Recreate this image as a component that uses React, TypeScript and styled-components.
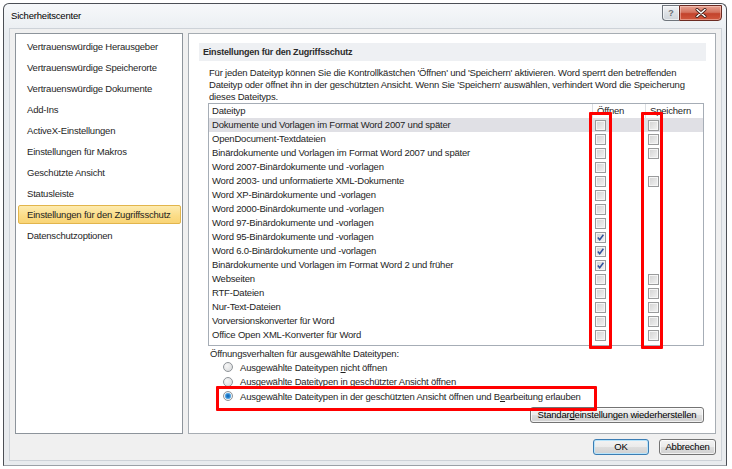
import React from "react";
import styled, { createGlobalStyle } from "styled-components";

const GlobalStyle = createGlobalStyle`
  * { box-sizing: border-box; }
  html, body { margin: 0; padding: 0; background: #ffffff; }
  body {
    font-family: "Liberation Sans", Arial, sans-serif;
    font-size: 9.5px;
    letter-spacing: -0.2px;
    color: #1e1e1e;
  }
`;

const navItems = [
  "Vertrauenswürdige Herausgeber",
  "Vertrauenswürdige Speicherorte",
  "Vertrauenswürdige Dokumente",
  "Add-Ins",
  "ActiveX-Einstellungen",
  "Einstellungen für Makros",
  "Geschützte Ansicht",
  "Statusleiste",
  "Einstellungen für den Zugriffsschutz",
  "Datenschutzoptionen",
];

type FileRow = { label: string; open: boolean; save: boolean | null };

const fileRows: FileRow[] = [
  { label: "Dokumente und Vorlagen im Format Word 2007 und später", open: false, save: false },
  { label: "OpenDocument-Textdateien", open: false, save: false },
  { label: "Binärdokumente und Vorlagen im Format Word 2007 und später", open: false, save: false },
  { label: "Word 2007-Binärdokumente und -vorlagen", open: false, save: null },
  { label: "Word 2003- und unformatierte XML-Dokumente", open: false, save: false },
  { label: "Word XP-Binärdokumente und -vorlagen", open: false, save: null },
  { label: "Word 2000-Binärdokumente und -vorlagen", open: false, save: null },
  { label: "Word 97-Binärdokumente und -vorlagen", open: false, save: null },
  { label: "Word 95-Binärdokumente und -vorlagen", open: true, save: null },
  { label: "Word 6.0-Binärdokumente und -vorlagen", open: true, save: null },
  { label: "Binärdokumente und Vorlagen im Format Word 2 und früher", open: true, save: null },
  { label: "Webseiten", open: false, save: false },
  { label: "RTF-Dateien", open: false, save: false },
  { label: "Nur-Text-Dateien", open: false, save: false },
  { label: "Vorversionskonverter für Word", open: false, save: false },
  { label: "Office Open XML-Konverter für Word", open: false, save: false },
];

const App = () => {
  return (
    <>
      <GlobalStyle />
      <Window>
        <TitleBar>
          <Title>Sicherheitscenter</Title>
          <Controls>
            <HelpButton>?</HelpButton>
            <CloseButton>
              <svg width="12" height="10" viewBox="0 0 12 10">
                <path d="M2 1.5 L10 8.5 M10 1.5 L2 8.5" stroke="#3a1a14" strokeWidth="3" strokeLinecap="round" />
                <path d="M2 1.5 L10 8.5 M10 1.5 L2 8.5" stroke="#ffffff" strokeWidth="1.6" strokeLinecap="round" />
              </svg>
            </CloseButton>
          </Controls>
        </TitleBar>

        <Client>
          <Body>
            <NavPanel>
              {navItems.map((item, i) => (
                <NavItem key={item} $active={i === 8}>
                  {item}
                </NavItem>
              ))}
            </NavPanel>

            <ContentPanel>
              <SectionBand>Einstellungen für den Zugriffsschutz</SectionBand>

              <Section>
                <Intro>
                  Für jeden Dateityp können Sie die Kontrollkästchen 'Öffnen' und 'Speichern' aktivieren. Word sperrt den betreffenden
                  <br />
                  Dateityp oder öffnet ihn in der geschützten Ansicht. Wenn Sie 'Speichern' auswählen, verhindert Word die Speicherung
                  <br />
                  dieses Dateityps.
                </Intro>

                <Table>
                  <HeaderRow>
                    <HeadCell>Dateityp</HeadCell>
                    <HeadCell $sep>Öffnen</HeadCell>
                    <HeadCell $sep>Speichern</HeadCell>
                  </HeaderRow>
                  {fileRows.map((row, i) => (
                    <Row key={row.label} $selected={i === 0}>
                      <LabelCell>{row.label}</LabelCell>
                      <BoxCell>
                        <Checkbox checked={row.open} />
                      </BoxCell>
                      <BoxCell>{row.save !== null && <Checkbox checked={row.save} />}</BoxCell>
                    </Row>
                  ))}
                  <Marker $left={380} $width={23} />
                  <Marker $left={432} $width={22} />
                </Table>

                <GroupLabel>Öffnungsverhalten für ausgewählte Dateitypen:</GroupLabel>
                <RadioList>
                  <RadioRow>
                    <Radio />
                    <span>
                      Ausgewählte Dateitypen <u>n</u>icht öffnen
                    </span>
                  </RadioRow>
                  <RadioRow>
                    <Radio />
                    <span>Ausgewählte Dateitypen in geschützter Ansicht öffnen</span>
                  </RadioRow>
                  <RadioRow $marked>
                    <Radio $on />
                    <span>
                      Ausgewählte Dateitypen in der geschützten Ansicht öffnen und B<u>e</u>arbeitung erlauben
                    </span>
                  </RadioRow>
                </RadioList>

                <RestoreRow>
                  <Button $width={174}>
                    Standar<u>d</u>einstellungen wiederherstellen
                  </Button>
                </RestoreRow>
              </Section>
            </ContentPanel>
          </Body>

          <Footer>
            <Button $width={56} $default>
              OK
            </Button>
            <Button $width={57}>Abbrechen</Button>
          </Footer>
        </Client>
      </Window>
    </>
  );
};

const Checkbox = ({ checked }: { checked: boolean }) => (
  <Box>
    {checked && (
      <svg width="9" height="9" viewBox="0 0 9 9">
        <path d="M1.8 4.6 L3.7 6.8 L7.4 1.8" fill="none" stroke="#2f4f9c" strokeWidth="1.5" />
      </svg>
    )}
  </Box>
);

// Window chrome
const Window = styled.div`
  margin: 3px 0 0 3px;
  width: 724px;
  height: 463px;
  display: flex;
  flex-direction: column;
  border: 1px solid #4b4f55;
  border-bottom-color: #9aa0a6;
  border-radius: 6px 6px 0 0;
  background: linear-gradient(#f6f8fa 0px, #e9edf1 30px, #e8ebee 100%);
`;

const TitleBar = styled.div`
  height: 24px;
  display: flex;
  align-items: flex-start;
  flex-shrink: 0;
`;

const Title = styled.div`
  padding: 6px 0 0 7px;
  font-size: 9.5px;
  color: #000;
`;

const Controls = styled.div`
  margin: 1px 4px 0 auto;
  display: flex;
`;

const HelpButton = styled.div`
  width: 17px;
  height: 16px;
  border: 1px solid #6f757c;
  border-right: none;
  border-radius: 0 0 0 4px;
  background: linear-gradient(#f3f4f6, #dde1e5 50%, #cfd4d9);
  box-shadow: inset 0 0 0 1px rgba(255, 255, 255, 0.6);
  color: #6b6f74;
  font-size: 9px;
  font-weight: bold;
  text-align: center;
  line-height: 14px;
`;

const CloseButton = styled.div`
  width: 43px;
  height: 16px;
  border: 1px solid #6b2b22;
  border-radius: 0 0 4px 0;
  background: linear-gradient(#e8a493, #d4735f 45%, #c3432c 55%, #d1583e);
  box-shadow: inset 0 0 0 1px rgba(255, 220, 210, 0.45);
  display: flex;
  align-items: center;
  justify-content: center;
`;

const Client = styled.div`
  flex: 1;
  margin: 0 4px 4px 5px;
  border: 1px solid #cdd2d8;
  background: #f0f0f0;
  padding: 4px 5px 0 5px;
  display: flex;
  flex-direction: column;
`;

const Body = styled.div`
  height: 401px;
  display: flex;
  gap: 5px;
`;

// Left navigation
const NavPanel = styled.div`
  width: 168px;
  border: 1px solid #8d949b;
  background: #ffffff;
  padding: 3px 1px 3px 2px;
  display: flex;
  flex-direction: column;
  gap: 2px;
`;

const NavItem = styled.div<{ $active?: boolean }>`
  height: 19px;
  padding-left: 8px;
  line-height: 17px;
  white-space: nowrap;
  border: 1px solid ${(p) => (p.$active ? "#e2b54c" : "transparent")};
  border-radius: 2px;
  background: ${(p) => (p.$active ? "linear-gradient(#fdebb0, #fbdc86 60%, #f9d476)" : "transparent")};
`;

// Right panel
const ContentPanel = styled.div`
  flex: 1;
  border: 1px solid #a7adb3;
  background: #ffffff;
  padding: 9px 9px 0 10px;
  display: flex;
  flex-direction: column;
`;

const SectionBand = styled.div`
  height: 18px;
  padding-left: 4px;
  line-height: 18px;
  background: #eef0f3;
  font-weight: bold;
  font-size: 9px;
  color: #2b2b2b;
`;

const Section = styled.div`
  padding-left: 10px;
  display: flex;
  flex-direction: column;
`;

const Intro = styled.p`
  margin: 6px 0 0;
  line-height: 12px;
  white-space: nowrap;
`;

const Table = styled.div`
  position: relative;
  width: 496px;
  height: 243px;
  margin-left: -1px;
  border: 1px solid #a6adb6;
`;

const columns = "383px 53px 1fr";

const HeaderRow = styled.div`
  display: grid;
  grid-template-columns: ${columns};
  height: 14px;
`;

const HeadCell = styled.div<{ $sep?: boolean }>`
  padding-left: ${(p) => (p.$sep ? "4px" : "3px")};
  line-height: 14px;
  border-left: ${(p) => (p.$sep ? "1px solid #dcdfe3" : "none")};
`;

const Row = styled.div<{ $selected?: boolean }>`
  display: grid;
  grid-template-columns: ${columns};
  height: 14px;
  background: ${(p) => (p.$selected ? "#e0e0e5" : "transparent")};
`;

const LabelCell = styled.div`
  padding-left: 3px;
  line-height: 14px;
  white-space: nowrap;
`;

const BoxCell = styled.div`
  padding-left: 3px;
  display: flex;
  align-items: center;
`;

const Box = styled.div`
  width: 11px;
  height: 11px;
  border: 1px solid #9a9b9c;
  background: linear-gradient(135deg, #d2d2d2, #f3f3f3);
  box-shadow: inset 0 0 0 1px #f6f6f6;
  display: flex;
  align-items: center;
  justify-content: center;
`;

// red annotation frames over the checkbox columns
const Marker = styled.div<{ $left: number; $width: number }>`
  position: absolute;
  top: 8px;
  left: ${(p) => p.$left}px;
  width: ${(p) => p.$width}px;
  height: 237px;
  border: 3px solid #ff0000;
  border-radius: 1px;
  pointer-events: none;
`;

const GroupLabel = styled.div`
  margin-top: 2px;
  padding-left: 1px;
  line-height: 12px;
`;

const RadioList = styled.div`
  display: flex;
  flex-direction: column;
  padding-left: 14px;
`;

const RadioRow = styled.div<{ $marked?: boolean }>`
  position: relative;
  height: 14.5px;
  display: flex;
  align-items: center;
  gap: 7px;
  white-space: nowrap;

  &::after {
    content: "";
    display: ${(p) => (p.$marked ? "block" : "none")};
    position: absolute;
    left: -7px;
    top: -3px;
    width: 375px;
    height: 19px;
    border: 3px solid #ff0000;
    border-radius: 1px;
  }
`;

const Radio = styled.div<{ $on?: boolean }>`
  width: 10px;
  height: 10px;
  flex-shrink: 0;
  border-radius: 50%;
  border: 1px solid #8f9499;
  background: ${(p) =>
    p.$on
      ? "radial-gradient(circle, #0b5fae 0, #2f8ad4 2px, #7fc0ee 3px, #eef1f4 3.5px, #d7dadd 5px)"
      : "radial-gradient(circle at 35% 35%, #f7f7f7, #d6d8da)"};
`;

const RestoreRow = styled.div`
  display: flex;
  justify-content: flex-end;
  margin: 3px 2px 0 0;
`;

const Button = styled.div<{ $width: number; $default?: boolean }>`
  width: ${(p) => p.$width}px;
  height: 16px;
  border: 1px solid ${(p) => (p.$default ? "#3b7db3" : "#737373")};
  border-radius: 3px;
  background: linear-gradient(#f3f3f3, #ebebeb 48%, #dddddd 52%, #d0d0d0);
  box-shadow: inset 0 0 0 1px ${(p) => (p.$default ? "#b8e4fb" : "rgba(255, 255, 255, 0.7)")};
  color: #000;
  text-align: center;
  line-height: 14px;
  white-space: nowrap;
`;

// Footer
const Footer = styled.div`
  display: flex;
  justify-content: flex-end;
  gap: 10px;
  padding-top: 5px;
`;

export default App;
